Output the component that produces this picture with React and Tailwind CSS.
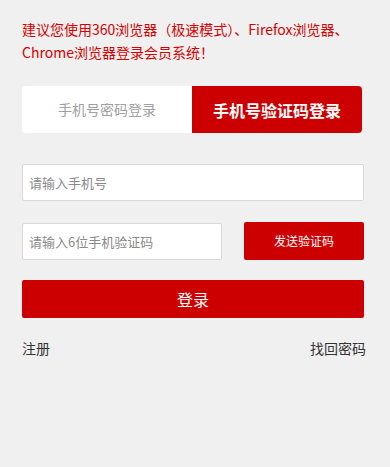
import React from "react";

const font = { fontFamily: '"Noto Sans CJK SC", "Noto Sans", sans-serif' };

export default function App() {
  return (
    <div
      className="min-h-[467px] w-[390px] bg-[#f0f0f0] px-[22px] pt-[18px]"
      style={font}
    >
      <p className="whitespace-nowrap text-[14px] leading-[23px] text-[#d40000]">
        建议您使用360浏览器（极速模式）、Firefox浏览器、
        <br />
        Chrome浏览器登录会员系统！
      </p>

      <div className="mt-[22px] flex h-[47px] w-[340px] overflow-hidden rounded-[4px]">
        <div className="flex flex-1 items-center justify-center bg-white text-[14px] text-[#a0a0a0]">
          手机号密码登录
        </div>
        <div className="flex flex-1 items-center justify-center bg-[#cc0000] text-[16px] font-bold text-white">
          手机号验证码登录
        </div>
      </div>

      <input
        className="mt-[31px] block h-[37px] w-[342px] rounded-[2px] border border-[#d9d9d9] bg-white px-[6px] text-[13px] text-[#333] outline-none placeholder:text-[#8a8a8a]"
        placeholder="请输入手机号"
      />

      <div className="mt-[21px] flex w-[342px] items-center justify-between">
        <input
          className="block h-[37px] w-[200px] rounded-[2px] border border-[#d9d9d9] bg-white px-[6px] text-[13px] text-[#333] outline-none placeholder:text-[#8a8a8a]"
          placeholder="请输入6位手机验证码"
        />
        <button className="flex h-[38px] w-[120px] items-center justify-center rounded-[2px] bg-[#cc0000] text-[12px] text-white">
          发送验证码
        </button>
      </div>

      <button className="mt-[20px] flex h-[38px] w-[342px] items-center justify-center rounded-[2px] bg-[#cc0000] text-[16px] text-white">
        登录
      </button>

      <div className="mt-[20px] flex w-[344px] justify-between text-[14px] leading-[20px] text-[#333]">
        <span>注册</span>
        <span>找回密码</span>
      </div>
    </div>
  );
}
